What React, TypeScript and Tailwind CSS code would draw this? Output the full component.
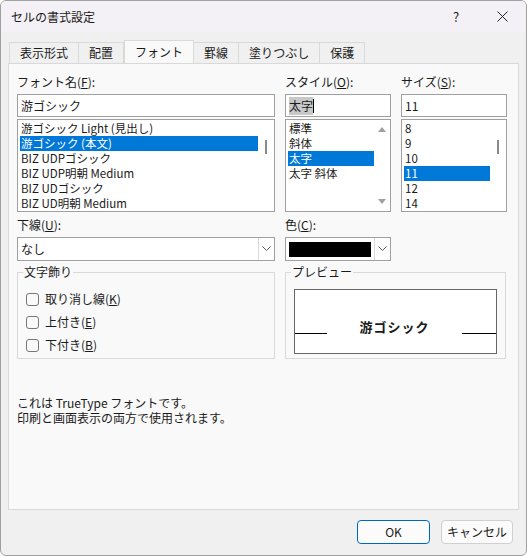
import React from "react";

const font = { fontFamily: '"Noto Sans CJK JP", "Noto Sans", sans-serif' };

function Tab({ label, active }: { label: string; active?: boolean }) {
  return (
    <div
      className={
        active
          ? "h-[23px] -mb-px mt-0 flex items-center border border-b-0 border-[#d9d9d9] bg-[#f9f9f9] px-[10px] text-[12px] z-10"
          : "h-[21px] mt-[2px] flex items-center border border-b-0 border-l-0 border-[#d9d9d9] bg-[#f0f0f0] px-[10px] text-[12px] first:border-l"
      }
    >
      {label}
    </div>
  );
}

function ScrollBar() {
  return (
    <div className="flex w-[16px] flex-col items-center justify-between py-[6px]">
      <svg width="8" height="6" viewBox="0 0 8 6"><path d="M0 6 L4 1 L8 6Z" fill="#a0a0a0" /></svg>
      <svg width="8" height="6" viewBox="0 0 8 6"><path d="M0 0 L4 5 L8 0Z" fill="#a0a0a0" /></svg>
    </div>
  );
}

function Chevron() {
  return (
    <div className="flex h-full w-[16px] items-center justify-center border-l border-[#d9d9d9] bg-white">
      <svg width="9" height="6" viewBox="0 0 9 6"><path d="M0.5 0.5 L4.5 4.5 L8.5 0.5" fill="none" stroke="#555" /></svg>
    </div>
  );
}

function Check({ label, u }: { label: string; u: string }) {
  return (
    <div className="flex h-[16px] items-center gap-[6px] text-[12px] leading-[16px]">
      <div className="h-[13px] w-[13px] rounded-[3px] border border-[#777] bg-[#f9f9f9]" />
      <span>
        {label}(<span className="underline">{u}</span>)
      </span>
    </div>
  );
}

function List({ items, sel, children }: { items: string[]; sel: number; children: React.ReactNode }) {
  return (
    <div className="mt-[2px] flex h-[93px] border border-[#a0a0a0] bg-white">
      <div className="flex-1 overflow-hidden pt-[1px] pl-[2px]">
        {items.map((f, i) => (
          <div key={f} className={"h-[15px] overflow-hidden whitespace-nowrap pl-[1px] text-[11.5px] leading-[15px] " + (i === sel ? "bg-[#0078d7] text-white" : "")}>{f}</div>
        ))}
      </div>
      {children}
    </div>
  );
}

export default function App() {
  const fonts = ["游ゴシック Light (見出し)", "游ゴシック (本文)", "BIZ UDPゴシック", "BIZ UDP明朝 Medium", "BIZ UDゴシック", "BIZ UD明朝 Medium"];
  const styles = ["標準", "斜体", "太字", "太字 斜体"];
  const sizes = ["8", "9", "10", "11", "12", "14"];
  const thumb = <div className="flex w-[16px] justify-center pt-[20px]"><div className="h-[14px] w-[2px] bg-[#8a8a8a]" /></div>;
  return (
    <div style={font} className="flex h-[556px] w-[527px] flex-col overflow-hidden rounded-[6px] border border-[#a0a0a0] bg-[#f0f0f0] text-[#1a1a1a]">
      <div className="flex h-[31px] shrink-0 items-center bg-[#f3f0f6] pl-[10px] text-[12px]">
        <span className="flex-1">セルの書式設定</span>
        <span className="w-[46px] text-center text-[13px]">?</span>
        <svg className="mx-[18px]" width="11" height="11" viewBox="0 0 11 11"><path d="M0.5 0.5 L10.5 10.5 M10.5 0.5 L0.5 10.5" stroke="#222" /></svg>
      </div>
      <div className="flex pl-[8px] pt-[8px]">
        <Tab label="表示形式" />
        <Tab label="配置" />
        <Tab label="フォント" active />
        <Tab label="罫線" />
        <Tab label="塗りつぶし" />
        <Tab label="保護" />
      </div>
      <div className="mx-[7px] flex h-[447px] flex-col border border-[#d9d9d9] bg-[#f9f9f9] px-[8px] pt-[9px] text-[12px]">
        <div className="flex gap-[10px]">
          <div className="flex w-[258px] flex-col">
            <div className="mb-[4px] h-[17px]">フォント名(<span className="underline">F</span>):</div>
            <div className="flex h-[23px] items-center border border-[#a0a0a0] bg-white px-[3px]">游ゴシック</div>
            <List items={fonts} sel={1}>{thumb}</List>
          </div>
          <div className="flex w-[106px] flex-col">
            <div className="mb-[4px] h-[17px]">スタイル(<span className="underline">O</span>):</div>
            <div className="flex h-[23px] items-center border border-[#a0a0a0] bg-white px-[3px]"><span className="bg-[#c8c8c8]">太字</span><span className="h-[14px] w-px bg-black" /></div>
            <List items={styles} sel={2}><ScrollBar /></List>
          </div>
          <div className="flex w-[106px] flex-col">
            <div className="mb-[4px] h-[17px]">サイズ(<span className="underline">S</span>):</div>
            <div className="flex h-[23px] items-center border border-[#a0a0a0] bg-white px-[3px]">11</div>
            <List items={sizes} sel={3}>{thumb}</List>
          </div>
        </div>
        <div className="mt-[4px] flex gap-[10px]">
          <div className="flex w-[258px] flex-col">
            <div className="mb-[4px] h-[17px]">下線(<span className="underline">U</span>):</div>
            <div className="flex h-[24px] items-center border border-[#a0a0a0] bg-white pl-[3px]"><span className="flex-1">なし</span><Chevron /></div>
          </div>
          <div className="flex w-[106px] flex-col">
            <div className="mb-[4px] h-[17px]">色(<span className="underline">C</span>):</div>
            <div className="flex h-[24px] items-center border border-[#a0a0a0] bg-white pl-[3px]"><div className="mr-[3px] h-[15px] flex-1 bg-black" /><Chevron /></div>
          </div>
        </div>
        <div className="mt-[11px] flex gap-[10px]">
          <div className="relative h-[87px] w-[258px] border border-[#d9d9d9]">
            <span className="absolute -top-[9px] left-[5px] bg-[#f9f9f9] px-[1px] leading-[16px]">文字飾り</span>
            <div className="flex flex-col gap-[7px] pl-[8px] pt-[18px]">
              <Check label="取り消し線" u="K" />
              <Check label="上付き" u="E" />
              <Check label="下付き" u="B" />
            </div>
          </div>
          <div className="relative h-[87px] w-[221px] border border-[#d9d9d9] px-[8px] pt-[16px]">
            <span className="absolute -top-[9px] left-[5px] bg-[#f9f9f9] px-[1px] leading-[16px]">プレビュー</span>
            <div className="flex h-[65px] items-center border border-[#666] bg-white pt-[10px]">
              <div className="mt-[14px] h-px w-[32px] bg-black" />
              <div className="flex-1 text-center text-[13px] font-bold tracking-[1px]">游ゴシック</div>
              <div className="mt-[14px] h-px w-[34px] bg-black" />
            </div>
          </div>
        </div>
        <div className="mt-[36px] leading-[15px]">
          <div>これは TrueType フォントです。</div>
          <div>印刷と画面表示の両方で使用されます。</div>
        </div>
      </div>
      <div className="flex justify-end gap-[11px] pr-[13px] pt-[10px] text-[12px]">
        <div className="flex h-[24px] w-[73px] items-center justify-center rounded-[4px] border border-[#0067c0] bg-[#fbfbfb]">OK</div>
        <div className="flex h-[24px] w-[72px] items-center justify-center rounded-[4px] border border-[#d0d0d0] bg-[#fbfbfb]">キャンセル</div>
      </div>
    </div>
  );
}
